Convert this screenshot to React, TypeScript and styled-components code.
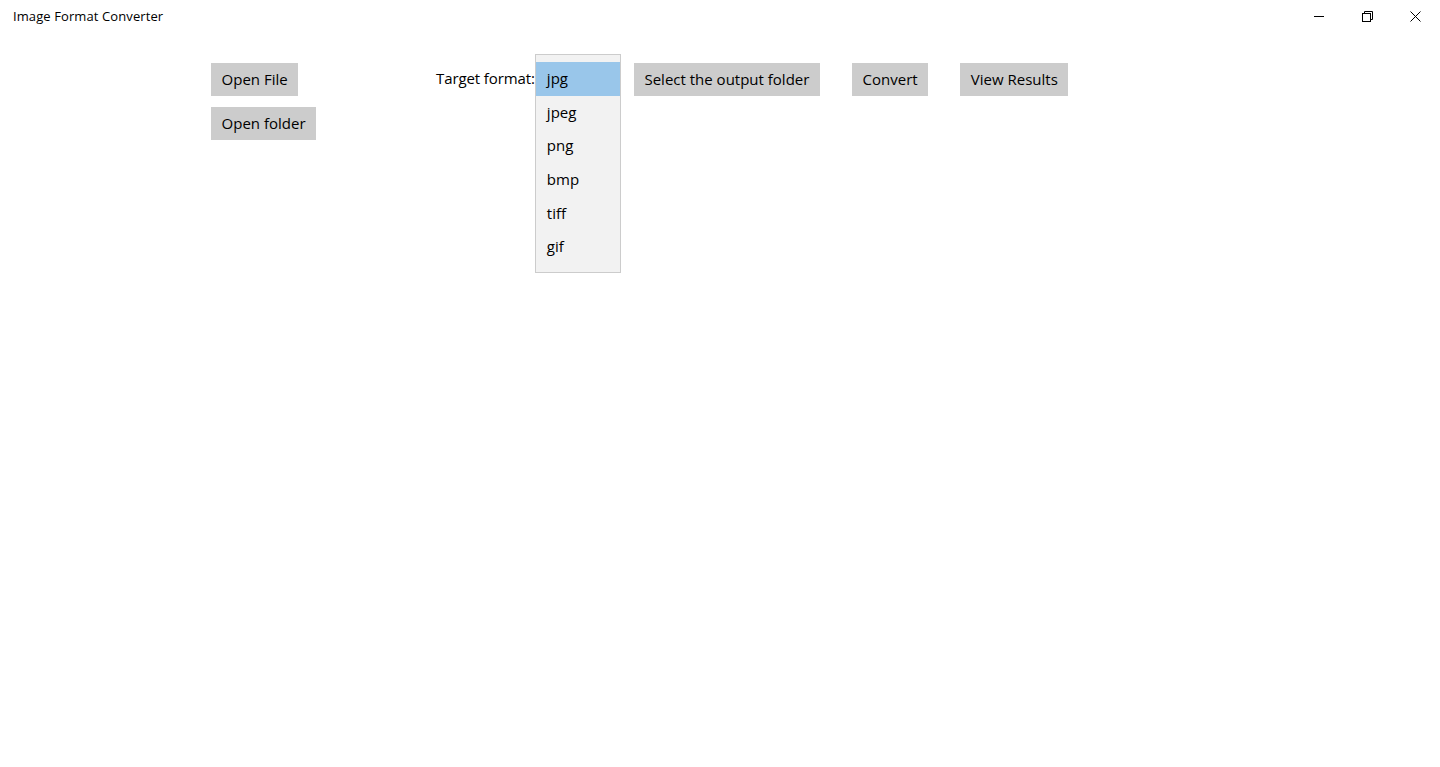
import React, { useState } from 'react';
import styled, { createGlobalStyle } from 'styled-components';

const GlobalStyle = createGlobalStyle`
	html, body {
		margin: 0;
		padding: 0;
		background: #ffffff;
	}
	body {
		font-family: 'Open Sans', 'Noto Sans', sans-serif;
		color: #000000;
	}
`;

const Window = styled.div`
	width: 1440px;
	height: 767px;
	background: #ffffff;
	display: flex;
	flex-direction: column;
`;

const TitleBar = styled.div`
	height: 32px;
	display: flex;
	flex-direction: row;
	align-items: center;
	justify-content: space-between;
	padding-left: 13px;
`;

const Caption = styled.span`
	font-size: 13px;
	color: #000000;
	letter-spacing: 0.1px;
`;

const Controls = styled.div`
	display: flex;
	flex-direction: row;
	height: 100%;
	padding-right: 1px;
`;

const ControlButton = styled.div`
	width: 48px;
	height: 100%;
	display: flex;
	align-items: center;
	justify-content: center;
`;

const Content = styled.div`
	display: flex;
	flex-direction: row;
	align-items: flex-start;
	padding-top: 31px;
	padding-left: 211px;
`;

const FileColumn = styled.div`
	width: 225px;
	display: flex;
	flex-direction: column;
	align-items: flex-start;
	gap: 11px;
`;

const Button = styled.button<{ $gap?: number }>`
	height: 33px;
	padding: 0 10.6px 2px;
	border: none;
	background: #cccccc;
	font-family: 'Open Sans', 'Noto Sans', sans-serif;
	font-size: 15px;
	color: #000000;
	margin-left: ${(p) => p.$gap ?? 0}px;
	cursor: pointer;
`;

const Label = styled.span`
	height: 33px;
	line-height: 31px;
	font-size: 15px;
	letter-spacing: -0.1px;
`;

const Combo = styled.div`
	position: relative;
	width: 86px;
	height: 33px;
`;

const Popup = styled.ul`
	position: absolute;
	top: -9px;
	left: 0;
	width: 84px;
	margin: 0;
	padding: 7px 0 8px;
	list-style: none;
	background: #f2f2f2;
	border: 1px solid #cccccc;
`;

const Option = styled.li<{ $selected?: boolean }>`
	height: 33.7px;
	line-height: 32.6px;
	padding-left: 11px;
	font-size: 15px;
	background: ${(p) => (p.$selected ? '#99c6ea' : 'transparent')};
`;

const formats = ['jpg', 'jpeg', 'png', 'bmp', 'tiff', 'gif'];

const App = () => {
	const [format, setFormat] = useState('jpg');

	return (
		<Window>
			<GlobalStyle />
			<TitleBar>
				<Caption>Image Format Converter</Caption>
				<Controls>
					<ControlButton>
						<svg width="10" height="10" viewBox="0 0 10 10">
							<path d="M0 5.5h10" stroke="#000" strokeWidth="1" />
						</svg>
					</ControlButton>
					<ControlButton>
						<svg width="11" height="11" viewBox="0 0 11 11" fill="none" stroke="#000" strokeWidth="1">
							<rect x="0.5" y="2.5" width="8" height="8" />
							<path d="M2.5 2.5V0.5h8v8h-2" />
						</svg>
					</ControlButton>
					<ControlButton>
						<svg width="11" height="11" viewBox="0 0 11 11" stroke="#000" strokeWidth="1">
							<path d="M0.5 0.5l10 10M10.5 0.5l-10 10" />
						</svg>
					</ControlButton>
				</Controls>
			</TitleBar>
			<Content>
				<FileColumn>
					<Button>Open File</Button>
					<Button>Open folder</Button>
				</FileColumn>
				<Label>Target format:</Label>
				<Combo>
					<Popup>
						{formats.map((f) => (
							<Option key={f} $selected={f === format} onClick={() => setFormat(f)}>
								{f}
							</Option>
						))}
					</Popup>
				</Combo>
				<Button $gap={13}>Select the output folder</Button>
				<Button $gap={32}>Convert</Button>
				<Button $gap={32}>View Results</Button>
			</Content>
		</Window>
	);
};

export default App;
